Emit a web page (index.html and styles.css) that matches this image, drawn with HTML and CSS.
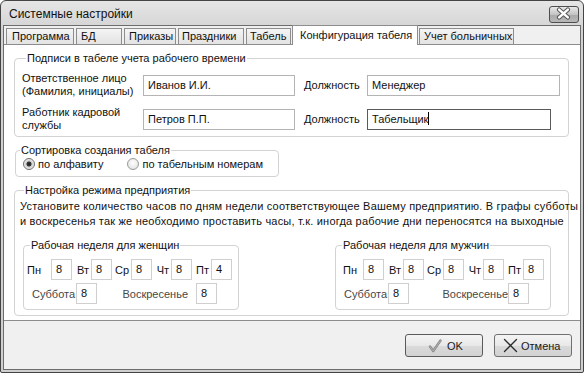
FILE: index.html
```html
<!DOCTYPE html>
<html lang="ru">
<head>
<meta charset="utf-8">
<title>Системные настройки</title>
<link rel="stylesheet" href="styles.css">
</head>
<body>
<div class="window">
  <div class="titlebar">
    <span class="title">Системные настройки</span>
    <div class="close">
      <svg width="30" height="17" viewBox="0 0 30 17">
        <path d="M10.5 4.5 L19.5 12.5 M19.5 4.5 L10.5 12.5" stroke="#555" stroke-width="4.6" stroke-linecap="round"/>
        <path d="M10.5 4.5 L19.5 12.5 M19.5 4.5 L10.5 12.5" stroke="#fff" stroke-width="2.6" stroke-linecap="round"/>
      </svg>
    </div>
  </div>
  <div class="client">
    <div class="tabs">
      <div class="tab t1">Программа</div>
      <div class="tab t2">БД</div>
      <div class="tab t3">Приказы</div>
      <div class="tab t4">Праздники</div>
      <div class="tab t5">Табель</div>
      <div class="tab t6 active">Конфигурация табеля</div>
      <div class="tab t7">Учет больничных</div>
    </div>
    <div class="panel">
      <fieldset class="group g-sign">
        <legend>Подписи в табеле учета рабочего времени</legend>
        <div class="sign-row first">
          <div class="sign-label">Ответственное лицо<br>(Фамилия, инициалы)</div>
          <div class="field name">Иванов И.И.</div>
          <div class="pos-label">Должность</div>
          <div class="field pos">Менеджер</div>
        </div>
        <div class="sign-row">
          <div class="sign-label">Работник кадровой<br>службы</div>
          <div class="field name">Петров П.П.</div>
          <div class="pos-label">Должность</div>
          <div class="field pos short focus">Табельщик<span class="caret"></span></div>
        </div>
      </fieldset>

      <fieldset class="group g-sort">
        <legend>Сортировка создания табеля</legend>
        <div class="radios">
          <span class="radio checked"></span><span class="rlabel">по алфавиту</span>
          <span class="radio second"></span><span class="rlabel">по табельным номерам</span>
        </div>
      </fieldset>

      <fieldset class="group g-mode">
        <legend>Настройка режима предприятия</legend>
        <p class="note">Установите количество часов по дням недели соответствующее Вашему предприятию. В графы субботы<br>и воскресенья так же необходимо проставить часы, т.к. иногда рабочие дни переносятся на выходные</p>
        <div class="weeks">
          <fieldset class="group week women">
            <legend>Рабочая неделя для женщин</legend>
            <div class="days">
              <span class="dl first">Пн</span><span class="box">8</span>
              <span class="dl">Вт</span><span class="box">8</span>
              <span class="dl">Ср</span><span class="box">8</span>
              <span class="dl">Чт</span><span class="box">8</span>
              <span class="dl">Пт</span><span class="box">4</span>
            </div>
            <div class="weekend">
              <span class="wl">Суббота</span><span class="box">8</span>
              <span class="wl sun">Воскресенье</span><span class="box">8</span>
            </div>
          </fieldset>
          <fieldset class="group week men">
            <legend>Рабочая неделя для мужчин</legend>
            <div class="days">
              <span class="dl first">Пн</span><span class="box">8</span>
              <span class="dl">Вт</span><span class="box">8</span>
              <span class="dl">Ср</span><span class="box">8</span>
              <span class="dl">Чт</span><span class="box">8</span>
              <span class="dl">Пт</span><span class="box">8</span>
            </div>
            <div class="weekend">
              <span class="wl">Суббота</span><span class="box">8</span>
              <span class="wl sun">Воскресенье</span><span class="box">8</span>
            </div>
          </fieldset>
        </div>
      </fieldset>
    </div>
    <div class="footer">
      <div class="btn ok">
        <svg class="ico" width="14" height="14" viewBox="0 0 14 14">
          <path d="M2 7.5 L5.2 12 L12.5 1.5" fill="none" stroke="#8a8a8a" stroke-width="2.4" stroke-linecap="round" stroke-linejoin="round"/>
          <path d="M2 7.5 L5.2 12 L12.5 1.5" fill="none" stroke="#b8b8b8" stroke-width="0.8" stroke-linecap="round" stroke-linejoin="round"/>
        </svg>
        <span>OK</span>
      </div>
      <div class="btn cancel">
        <svg class="ico" width="15" height="15" viewBox="0 0 15 15">
          <path d="M1.5 1.5 L13.5 13.5 M13.5 1.5 L1.5 13.5" stroke="#2a2a2a" stroke-width="1.3" stroke-linecap="round"/>
        </svg>
        <span>Отмена</span>
      </div>
    </div>
  </div>
</div>
</body>
</html>
```

FILE: styles.css
```css
* { box-sizing: border-box; }

html, body {
  margin: 0;
  padding: 0;
  background: #ffffff;
}

body {
  width: 584px;
  height: 373px;
  overflow: hidden;
  font-family: "Liberation Sans", Arial, sans-serif;
  font-size: 11px;
  color: #111;
}

.window {
  width: 584px;
  height: 373px;
  border: 1px solid #444;
  border-radius: 6px 6px 2px 2px;
  background: linear-gradient(#e6e6e6, #d2d2d2 30px, #cfcfcf);
  padding: 0 2px 2px 2px;
  display: flex;
  flex-direction: column;
}

.titlebar {
  height: 24px;
  flex: none;
  display: flex;
  align-items: center;
  justify-content: space-between;
  padding-left: 6px;
  padding-right: 2px;
}

.title {
  font-size: 12px;
  color: #111;
  margin-top: 1px;
}

.close {
  width: 30px;
  height: 17px;
  margin-top: 2px;
  border: 1px solid #4e4e4e;
  border-radius: 3px;
  background: linear-gradient(#e8e8e8, #c4c4c4 50%, #a9a9a9 51%, #b8b8b8);
  display: flex;
  align-items: center;
  justify-content: center;
  overflow: hidden;
}
.close svg { display: block; margin-left: -1px; margin-top: -1px; }

.client {
  flex: 1;
  background: #f0f0f0;
  border: 1px solid #6c6c6c;
  display: flex;
  flex-direction: column;
}

.tabs {
  height: 18px;
  flex: none;
  display: flex;
  align-items: flex-end;
  padding-left: 2px;
  position: relative;
  z-index: 1;
}

.tab {
  height: 16px;
  border: 1px solid #8d8d8d;
  border-bottom: none;
  background: linear-gradient(#f4f4f4, #e3e3e3);
  padding-left: 5px;
  line-height: 15px;
  white-space: nowrap;
  margin-right: 2px;
}
.t1 { width: 68px; }
.t2 { width: 46px; padding-left: 4px; }
.t3 { width: 52px; padding-left: 4px; }
.t4 { width: 66px; padding-left: 3px; }
.t5 { width: 45px; padding-left: 3px; }
.t6 { width: 126px; }
.t7 { width: 95px; padding-left: 4px; }

.tab.active {
  height: 20px;
  background: #fff;
  margin-bottom: -1px;
  padding-left: 7px;
  line-height: 18px;
  margin-left: -1px;
  margin-right: 1px;
}

.panel {
  height: 277px;
  flex: none;
  background: #fff;
  border-top: 1px solid #8d8d8d;
  border-bottom: 1px solid #8d8d8d;
  padding: 6px 11px 0 10px;
}

.group {
  margin: 0;
  padding: 0;
  border: 1px solid #d3d3d3;
  border-radius: 4px;
  min-width: 0;
}
.group legend {
  padding: 0 1px;
  margin-left: 4px;
  line-height: 14px;
  font-size: 11px;
  color: #111;
  white-space: nowrap;
}

/* signatures */
.g-sign {
  height: 86px;
  padding-left: 7px;
}
.sign-row {
  display: flex;
  align-items: center;
  height: 32px;
}
.sign-row.first { margin-top: 4px; margin-bottom: 2px; }
.sign-label {
  width: 121px;
  line-height: 13.5px;
  flex: none;
  white-space: nowrap;
}
.field {
  height: 21px;
  border: 1px solid #b4b4b4;
  background: #fff;
  padding-left: 4px;
  line-height: 19px;
  white-space: nowrap;
  flex: none;
}
.field.name { width: 152px; }
.field.pos { width: 193px; }
.field.pos.short { width: 184px; }
.field.focus { border-color: #5a5a5a; }
.caret {
  display: inline-block;
  width: 1px;
  height: 13px;
  background: #000;
  vertical-align: -2px;
}
.pos-label {
  width: 63px;
  margin-left: 9px;
  flex: none;
  white-space: nowrap;
}

/* sort */
.g-sort {
  width: 264px;
  height: 34px;
  margin-top: 6px;
  margin-left: 1px;
}
.radios {
  display: flex;
  align-items: center;
  height: 14px;
  padding-left: 7px;
  white-space: nowrap;
}
.radio {
  width: 12px;
  height: 12px;
  border-radius: 50%;
  border: 1px solid #9a9a9a;
  background: radial-gradient(circle at 50% 40%, #ffffff, #dcdcdc);
  flex: none;
}
.radio.checked {
  border-color: #6e6e6e;
  background: radial-gradient(circle, #1e1e1e 0, #3a3a3a 2.2px, #c9c9c9 2.8px, #eeeeee 5px);
}
.radio.second { margin-left: 24px; }
.rlabel { margin-left: 3px; flex: none; }

/* mode */
.g-mode {
  height: 133px;
  margin-top: 6px;
  padding-left: 5px;
}
.note {
  margin: 2px 0 0 0;
  line-height: 15px;
  white-space: nowrap;
  letter-spacing: 0.2px;
}
.weeks {
  display: flex;
  margin-top: 9px;
  margin-left: 3px;
}
.week {
  width: 216px;
  height: 72px;
  padding: 0;
}
.week legend { margin-left: 6px; }
.week.men { margin-left: 96px; }

.days {
  display: grid;
  grid-template-columns: 24px 21px repeat(4, 19px 21px);
  align-items: center;
  margin-top: 7px;
  padding-left: 3px;
}
.men .days { padding-left: 7px; grid-template-columns: 20px 21px repeat(4, 19px 21px); }

.dl {
  text-align: right;
  padding-right: 2px;
}
.dl.first { text-align: left; padding-right: 0; }

.box {
  width: 21px;
  height: 21px;
  border: 1px solid #cfcfcf;
  background: #fff;
  padding-left: 4px;
  line-height: 19px;
}

.weekend {
  display: grid;
  grid-template-columns: 44px 21px 99px 21px;
  align-items: center;
  margin-top: 3px;
  padding-left: 8px;
}
.wl { color: #474747; white-space: nowrap; }
.sun { text-align: right; padding-right: 8px; }
.men .sun { padding-right: 0; }

/* footer */
.footer {
  flex: 1;
  display: flex;
  justify-content: flex-end;
  align-items: flex-start;
  padding-top: 13px;
  padding-right: 8px;
  gap: 11px;
}
.btn {
  width: 78px;
  height: 23px;
  border: 1px solid #707070;
  border-radius: 3px;
  background: linear-gradient(#f4f4f4, #e8e8e8 50%, #dadada 51%, #d2d2d2);
  display: flex;
  align-items: center;
  gap: 5px;
  color: #1a1a1a;
  font-size: 11px;
}
.btn.ok { border-color: #5a5a5a; justify-content: flex-start; padding-left: 22px; }
.btn.cancel { justify-content: flex-start; padding-left: 8px; gap: 3px; }
.ico { display: block; flex: none; }
```
